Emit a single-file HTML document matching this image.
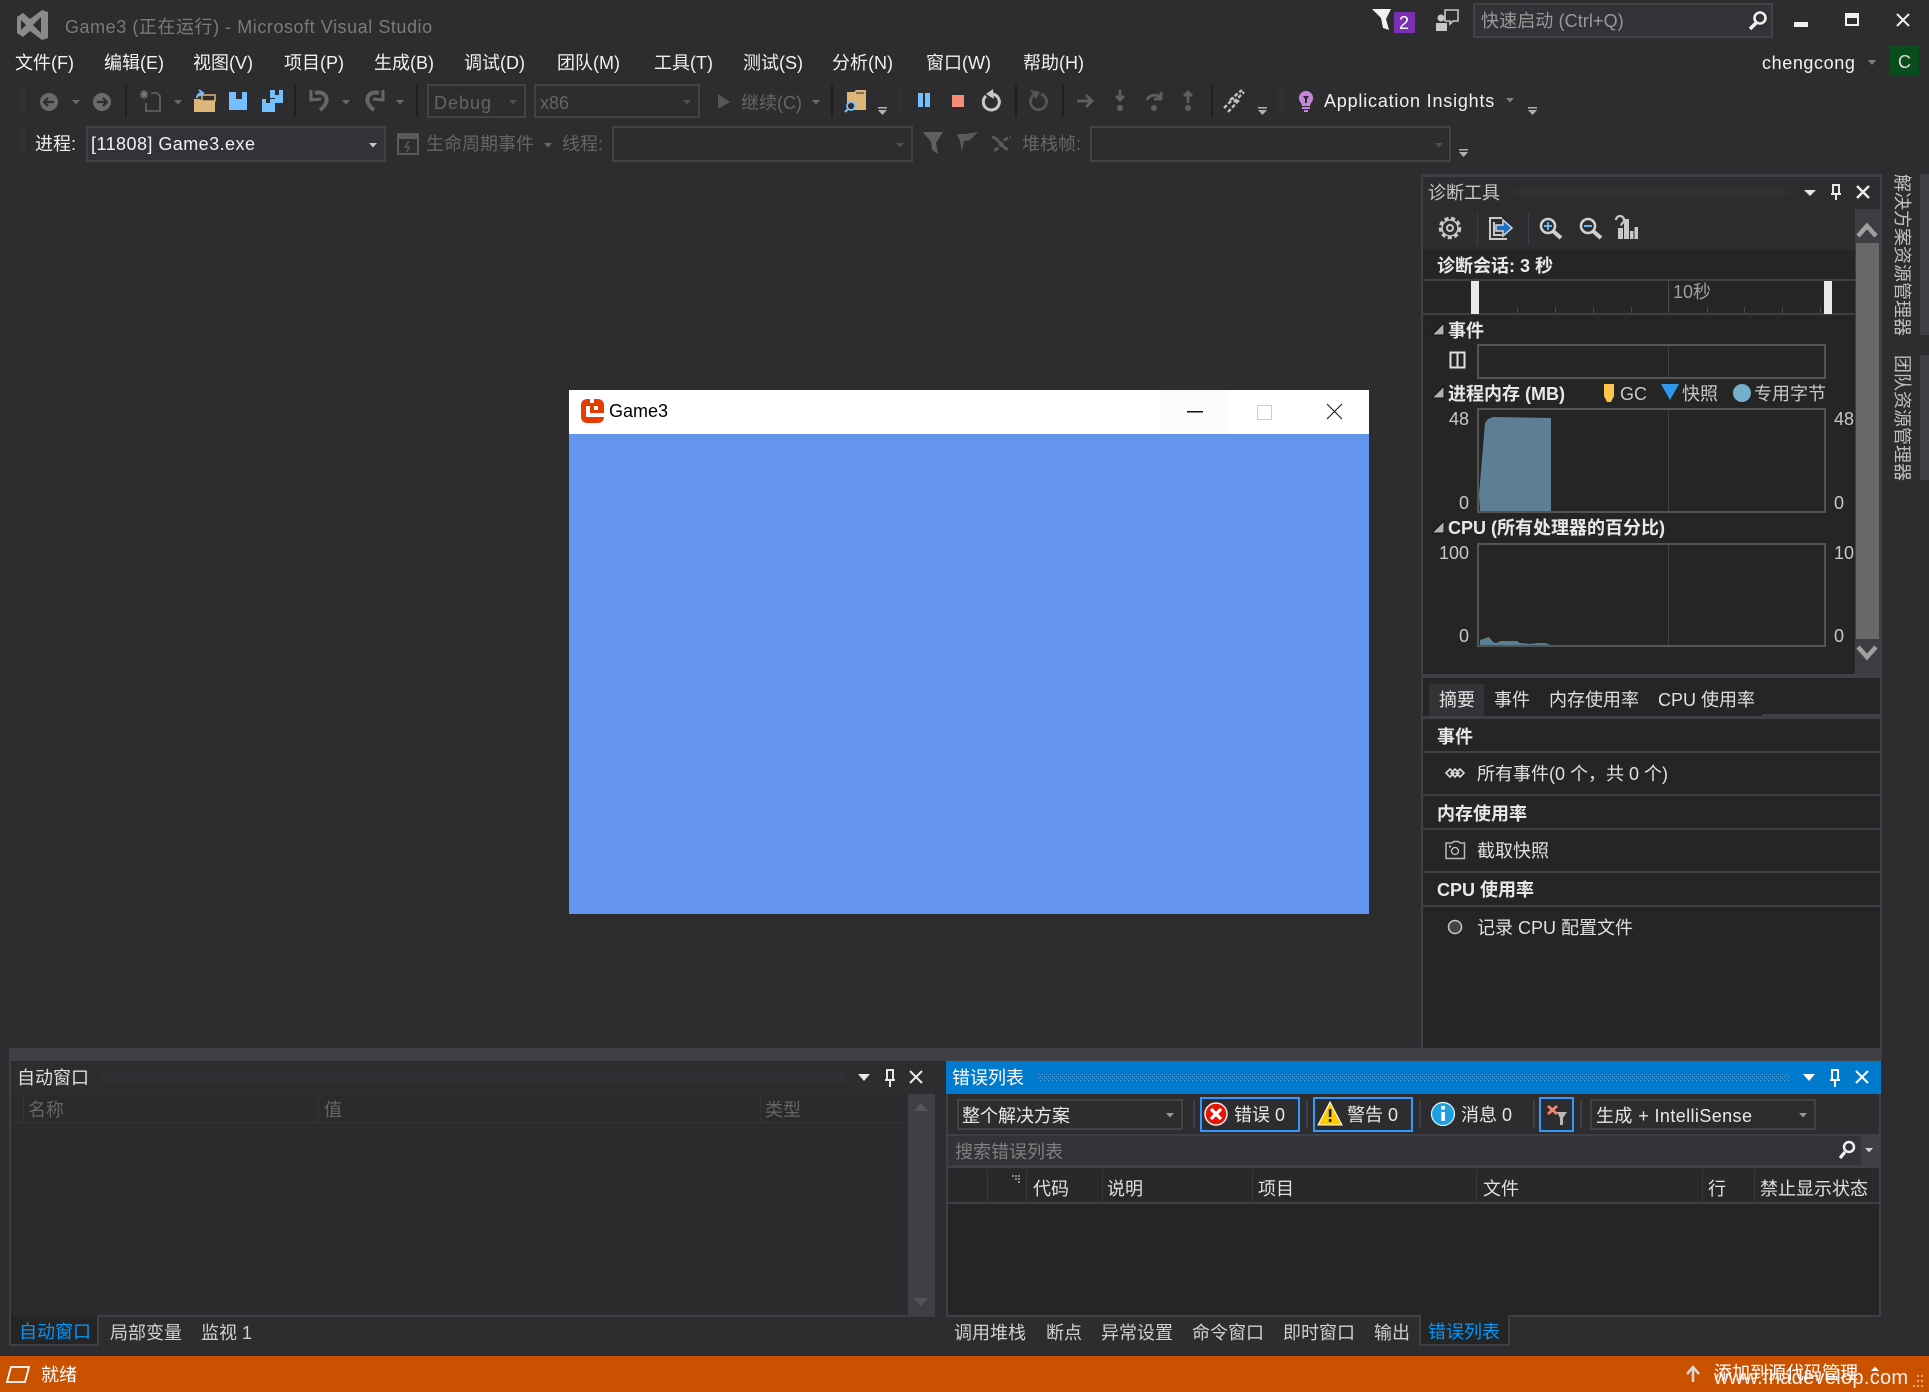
<!DOCTYPE html>
<html><head><meta charset="utf-8"><title>Game3 - Microsoft Visual Studio</title>
<style>
html,body{margin:0;padding:0;background:#2d2d30}
#r{position:relative;width:1929px;height:1392px;overflow:hidden;background:#2d2d30;font-family:"Liberation Sans","Noto Sans CJK SC",sans-serif;font-size:18px}
svg{position:absolute;left:0;top:0}
.t{position:absolute;white-space:nowrap;line-height:24px;height:24px;color:#f1f1f1;margin-top:1px}
.d{color:#656565}
.p{color:#d0d0d0}
.b{font-weight:bold;color:#e8e8e8}
.g{color:#c8c8c8}
.v{position:absolute;writing-mode:vertical-rl;text-orientation:sideways;white-space:nowrap;color:#c0c0c0;line-height:24px}
</style></head><body><div id="r">
<svg width="1929" height="1392" viewBox="0 0 1929 1392">
<defs>
<pattern id="gd" width="4" height="4" patternUnits="userSpaceOnUse"><rect width="1" height="1" fill="#46464a"/><rect x="2" y="2" width="1" height="1" fill="#46464a"/></pattern>
<pattern id="gb" width="4" height="4" patternUnits="userSpaceOnUse"><rect width="1" height="1" fill="#59a8de"/><rect x="2" y="2" width="1" height="1" fill="#59a8de"/></pattern>
</defs>
<!-- title bar icons -->
<path d="M17 17 L23 13 L30 19 L42 10 L48 12 V38 L42 40 L30 31 L23 37 L17 33 Z" fill="#8a8a8a"/>
<path d="M21 20 L26 25 L21 30 Z M41 17 V33 L33 25 Z" fill="#2d2d30"/>
<path d="M1372 9 H1391 L1386 19 L1389 30 L1383 28 L1381 18 Z" fill="#f1f1f1"/>
<rect x="1394" y="12" width="21" height="21" fill="#7b2fb5"/>
<path d="M1445 10 h13 v11 h-5 l-3 3 v-3 h-5 z" fill="none" stroke="#c8c8c8" stroke-width="1.600"/>
<circle cx="1441" cy="18" r="3.500" fill="#c8c8c8"/><rect x="1436" y="23" width="11" height="8" fill="#c8c8c8"/>
<rect x="1474" y="4" width="298" height="33" fill="#333337" stroke="#434346" stroke-width="2"/>
<circle cx="1760" cy="18" r="5.500" fill="none" stroke="#f1f1f1" stroke-width="2.600"/><path d="M1756 23 L1750 29" stroke="#f1f1f1" stroke-width="3.500"/>
<rect x="1794" y="22" width="14" height="5" fill="#f1f1f1"/>
<path d="M1845 13 h14 v13 h-14 z M1847 18 v6 h10 v-6 z" fill="#f1f1f1" fill-rule="evenodd"/>
<path d="M1897 14 L1909 26 M1909 14 L1897 26" stroke="#f1f1f1" stroke-width="2"/>
<path d="M1868 60 h8 l-4 5 z" fill="#808080"/>
<rect x="1889" y="46" width="30" height="30" fill="#084d1b"/>
<!-- toolbars grips -->
<rect x="19" y="86" width="6" height="28" fill="url(#gd)"/>
<rect x="19" y="128" width="6" height="28" fill="url(#gd)"/>
<rect x="898" y="86" width="6" height="28" fill="url(#gd)"/>
<rect x="1278" y="86" width="6" height="28" fill="url(#gd)"/>
<!-- separators -->
<g fill="#1f1f20">
<rect x="125" y="85" width="2" height="32"/><rect x="294" y="85" width="2" height="32"/><rect x="416" y="85" width="2" height="32"/><rect x="831" y="85" width="2" height="32"/><rect x="1015" y="85" width="2" height="32"/><rect x="1062" y="85" width="2" height="32"/><rect x="1211" y="85" width="2" height="32"/>
</g>
<!-- nav -->
<circle cx="49" cy="102" r="9" fill="#6a6a6a"/><path d="M54 102 H45 M48 98 L44 102 L48 106" stroke="#2d2d30" stroke-width="2.200" fill="none"/>
<circle cx="102" cy="102" r="9" fill="#6a6a6a"/><path d="M97 102 H106 M103 98 L107 102 L103 106" stroke="#2d2d30" stroke-width="2.200" fill="none"/>
<g fill="#6a6a6a"><path d="M72 100 h8 l-4 4.500 z"/><path d="M174 100 h8 l-4 4.500 z"/><path d="M342 100 h8 l-4 4.500 z"/><path d="M396 100 h8 l-4 4.500 z"/><path d="M509 100 h8 l-4 4.500 z" fill="#505050"/><path d="M683 100 h8 l-4 4.500 z" fill="#505050"/><path d="M812 100 h8 l-4 4.500 z"/></g>
<path d="M151 93 h6 l3 3 v15 h-14 v-8" fill="none" stroke="#5f5f5f" stroke-width="1.800"/><path d="M141 91.500 l6 6 M147 91.500 l-6 6 M144 90 v9 M140 94.500 h8" stroke="#777" stroke-width="1.500"/>
<!-- open -->
<path d="M194 99 h6 l2 2 h13 v11 h-21 z" fill="#dcb67a"/><path d="M202 95 h13 v6 h-13 z" fill="none" stroke="#dcb67a" stroke-width="1.500"/>
<path d="M197 98 a5 5 0 0 1 5 -5 M199 90 l4 3 l-4 3" fill="none" stroke="#75beff" stroke-width="2"/>
<!-- save -->
<path d="M229 92 h18 v18 h-18 z" fill="#75beff"/><rect x="236" y="92" width="6" height="7" fill="#2d2d30"/>
<path d="M270 90 h13 v13 h-8 v-5 h-5 z" fill="#75beff"/><rect x="275" y="90" width="4" height="5" fill="#2d2d30"/>
<path d="M262 99 h13 v13 h-13 z" fill="#75beff"/><rect x="266" y="99" width="4" height="4" fill="#2d2d30"/>
<!-- undo redo -->
<path d="M320 110 C332 101 326 90 315 93" fill="none" stroke="#666" stroke-width="4"/><path d="M311 90 V100 L321 99" fill="none" stroke="#666" stroke-width="3"/>
<path d="M374 110 C362 101 368 90 379 93" fill="none" stroke="#666" stroke-width="4"/><path d="M383 90 V100 L373 99" fill="none" stroke="#666" stroke-width="3"/>
<!-- combos -->
<rect x="428" y="85" width="97" height="32" fill="none" stroke="#434346" stroke-width="2"/>
<rect x="535" y="85" width="164" height="32" fill="none" stroke="#434346" stroke-width="2"/>
<path d="M718 94 L730 102 L718 109 Z" fill="#565656"/>
<!-- find -->
<path d="M847 92 h7 l2 -2 h10 v20 h-19 z" fill="#dcb67a"/><rect x="856" y="92" width="8" height="2" fill="#2d2d30" opacity=".5"/><circle cx="851" cy="106" r="4" fill="#2d2d30" stroke="#75beff" stroke-width="1.800"/><path d="M848 109 L845 112" stroke="#75beff" stroke-width="2"/>
<g fill="#b0b0b0"><path d="M878 107 h9 v1.500 h-9 z M878 110 h9 l-4.500 5 z"/><path d="M1258 107 h9 v1.500 h-9 z M1258 110 h9 l-4.500 5 z"/><path d="M1528 107 h9 v1.500 h-9 z M1528 110 h9 l-4.500 5 z"/><path d="M1459 149 h9 v1.500 h-9 z M1459 152 h9 l-4.500 5 z"/></g>
<!-- debug ctrls -->
<rect x="918" y="93" width="5" height="14" fill="#75beff"/><rect x="925" y="93" width="5" height="14" fill="#75beff"/>
<rect x="952" y="95" width="12" height="12" fill="#f88a78"/>
<path d="M986 96 A 8 8 0 1 0 992 94" fill="none" stroke="#c8c8c8" stroke-width="3"/><path d="M993 89 L986 94 L994 99 Z" fill="#c8c8c8"/>
<path d="M1034 95 A 8 8 0 1 0 1041 94" fill="none" stroke="#565656" stroke-width="2.800"/><path d="M1030 90 L1040 92 L1036 99 Z" fill="#565656"/>
<g stroke="#5f5f5f" stroke-width="2.800" fill="none"><path d="M1077 101 H1092 M1086 95 L1092 101 L1086 107"/><path d="M1120 90 V100 M1116 96 L1120 100 L1124 96"/><path d="M1147 100 A 8 7 0 0 1 1161 98 M1161 92 V99 H1154"/><path d="M1188 103 V93 M1184 96 L1188 92 L1192 96"/></g>
<g fill="#5f5f5f"><circle cx="1120" cy="108" r="3"/><circle cx="1154" cy="108" r="3"/><circle cx="1188" cy="108" r="3"/></g>
<g stroke="#c0c0c0" stroke-width="2.400" fill="none" stroke-dasharray="4 2"><path d="M1224 108 L1234 98 M1234 102 L1244 92"/><path d="M1228 112 L1239 100 M1230 100 L1242 90"/></g>
<path d="M1306 91 a7 7 0 0 1 5 12 l-1 3 h-8 l-1 -3 a7 7 0 0 1 5 -12 z" fill="#c586dc"/><path d="M1303 96 h6 l-2 3 v4 h-2 v-4 z" fill="#2d2d30"/><rect x="1302" y="107" width="8" height="2" fill="#c586dc"/><rect x="1304" y="110" width="4" height="2" fill="#c586dc"/>
<path d="M1506 98 h8 l-4 4.500 z" fill="#808080"/>
<!-- row2 -->
<rect x="87" y="127" width="298" height="34" fill="#333337" stroke="#434346" stroke-width="2"/>
<path d="M369 143 h8 l-4 4.500 z" fill="#c8c8c8"/>
<rect x="398" y="134" width="20" height="20" fill="none" stroke="#5a5a5a" stroke-width="2"/><rect x="398" y="134" width="20" height="5" fill="#5a5a5a"/><path d="M409 141 L405 147 H409 L407 152" stroke="#5a5a5a" stroke-width="1.500" fill="none"/>
<path d="M544 143 h8 l-4 4.500 z" fill="#6a6a6a"/>
<rect x="613" y="127" width="299" height="34" fill="none" stroke="#434346" stroke-width="2"/>
<path d="M896 143 h8 l-4 4.500 z" fill="#505050"/>
<path d="M923 132 H943 L936 143 L938 154 L932 150 L931 142 Z" fill="#606060"/>
<path d="M957 134 H966 L978 132 L970 140 L964 141 L962 152 L960 141 Z" fill="#5a5a5a"/>
<g stroke="#5a5a5a" stroke-width="2.800" fill="none"><path d="M992 137 C998 137 1002 149 1008 149"/><path d="M994 150 C1000 150 1002 138 1011 137" stroke-dasharray="5 2"/></g>
<rect x="1091" y="127" width="359" height="34" fill="none" stroke="#434346" stroke-width="2"/>
<path d="M1435 143 h8 l-4 4.500 z" fill="#505050"/>

<!-- game window -->
<rect x="569" y="390" width="800" height="44" fill="#fff"/>
<rect x="569" y="434" width="800" height="480" fill="#6495ed"/>
<rect x="1160" y="390" width="69" height="44" fill="#fbfbfb"/>
<rect x="581" y="399" width="23" height="24" rx="6" fill="#e73c00"/>
<rect x="590" y="399" width="4" height="4" fill="#fff"/>
<path d="M586 406 h4 v7 h14 v4 h-18 z" fill="#fff"/>
<rect x="594" y="406" width="4" height="4" fill="#fff"/>
<rect x="1187" y="411" width="16" height="1.500" fill="#111"/>
<rect x="1257.500" y="405.500" width="14" height="14" fill="none" stroke="#ccc"/>
<path d="M1327 404 L1342 419 M1342 404 L1327 419" stroke="#111" stroke-width="1"/>

<!-- diagnostics panel -->
<rect x="1421" y="174" width="461" height="874" fill="#3f3f46"/>
<rect x="1423" y="177" width="457" height="73" fill="#2d2d30"/>
<rect x="1423" y="250" width="432" height="424" fill="#252526"/>
<rect x="1855" y="209" width="25" height="465" fill="#3e3e42"/>
<rect x="1513" y="188" width="277" height="8" fill="url(#gd)"/>
<path d="M1804 190 h12 l-6 6 z" fill="#e8e8e8"/>
<path d="M1832 185 h8 M1833 185 v9 h6 v-9 M1831 194 h10 M1836 194 v6" stroke="#e8e8e8" stroke-width="2" fill="none"/>
<path d="M1857 186 L1869 198 M1869 186 L1857 198" stroke="#e8e8e8" stroke-width="2.500"/>
<rect x="1477" y="213" width="1" height="32" fill="#3f3f46"/><rect x="1528" y="213" width="1" height="32" fill="#3f3f46"/>
<circle cx="1450" cy="228" r="9.500" fill="none" stroke="#c8c8c8" stroke-width="3.500" stroke-dasharray="4 2.500"/><circle cx="1450" cy="228" r="8" fill="none" stroke="#c8c8c8" stroke-width="1.500"/><circle cx="1450" cy="228" r="3" fill="none" stroke="#c8c8c8" stroke-width="2"/>
<path d="M1502 218 H1490 V239 H1507 M1494 222 V235 H1502" fill="none" stroke="#c8c8c8" stroke-width="2"/><path d="M1496 225 H1503 V220 L1512 228 L1503 236 V231 H1496 Z" fill="#1e6fc0" stroke="#d8d8d8" stroke-width="1.500"/>
<circle cx="1548" cy="226" r="7" fill="none" stroke="#d0d0d0" stroke-width="2.600"/><path d="M1544 226 h8 M1548 222 v8" stroke="#6ab7f0" stroke-width="2"/><path d="M1553 231 L1561 238" stroke="#d0d0d0" stroke-width="4"/>
<circle cx="1588" cy="226" r="7" fill="none" stroke="#d0d0d0" stroke-width="2.600"/><path d="M1584 226 h8" stroke="#6ab7f0" stroke-width="2"/><path d="M1593 231 L1601 238" stroke="#d0d0d0" stroke-width="4"/>
<path d="M1616 220 a4 4 0 1 1 6 3.500 l-1 2" fill="none" stroke="#c8c8c8" stroke-width="2.200"/><g fill="#c8c8c8"><rect x="1618" y="228" width="5" height="11"/><rect x="1624" y="219" width="5" height="20"/><rect x="1630" y="231" width="3.500" height="8"/><rect x="1634.500" y="227" width="3.500" height="12"/></g>
<!-- ruler -->
<rect x="1423" y="279" width="432" height="2" fill="#3f3f46"/>
<rect x="1423" y="313" width="432" height="2" fill="#3f3f46"/>
<g fill="#4a4a4a"><rect x="1517" y="307" width="1" height="6"/><rect x="1555" y="307" width="1" height="6"/><rect x="1593" y="307" width="1" height="6"/><rect x="1631" y="307" width="1" height="6"/><rect x="1707" y="307" width="1" height="6"/><rect x="1744" y="307" width="1" height="6"/><rect x="1782" y="307" width="1" height="6"/><rect x="1820" y="307" width="1" height="6"/><rect x="1668" y="281" width="1" height="32"/></g>
<rect x="1471" y="281" width="8" height="33" fill="#e8e8e8"/><rect x="1824" y="281" width="8" height="33" fill="#e8e8e8"/>
<g fill="#b0b0b0" stroke="#111" stroke-width="1"><path d="M1444 323 V335 H1432 Z"/><path d="M1444 386 V398 H1432 Z"/><path d="M1444 521 V533 H1432 Z"/></g>
<path d="M1450.500 352.500 h14 v15 h-14 z M1457.500 352.500 v15" fill="none" stroke="#e0e0e0" stroke-width="2"/>
<g fill="none" stroke="#555" stroke-width="2"><rect x="1478" y="345" width="347" height="33"/><rect x="1478" y="409" width="347" height="103"/><rect x="1478" y="544" width="347" height="102"/></g>
<rect x="1668" y="346" width="1" height="31" fill="#3f3f46"/><rect x="1668" y="410" width="1" height="101" fill="#3f3f46"/><rect x="1668" y="545" width="1" height="100" fill="#3f3f46"/>
<path d="M1604 384 h10 v12 l-3 6 h-4 l-3 -6 z" fill="#fcc44f"/>
<path d="M1661 384 h18 l-9 16 z" fill="#2f98ee"/>
<circle cx="1742" cy="393" r="9" fill="#75afcb"/>
<path d="M1480 511 L1479 495 L1485 423 L1488 419 L1493 417 L1551 418 V511 Z" fill="#5c7f95"/>
<path d="M1480 645 V640 L1486 638 L1489 637 L1493 642 L1496 643 L1501 641 L1517 641 L1520 643 L1530 644 L1538 643 L1545 643 L1551 645 Z" fill="#5c7f95"/>
<rect x="1856" y="243" width="23" height="396" fill="#686868"/>
<path d="M1858 236 L1867 226 L1876 236" fill="none" stroke="#a0a0a0" stroke-width="4.500"/>
<path d="M1858 647 L1867 657 L1876 647" fill="none" stroke="#a0a0a0" stroke-width="4.500"/>
<!-- diag lower -->
<rect x="1423" y="678" width="457" height="36" fill="#252526"/>
<rect x="1423" y="714" width="339" height="2" fill="#252526"/>
<rect x="1429" y="684" width="55" height="32" fill="#333337"/>
<g fill="#252526"><rect x="1423" y="719" width="457" height="32"/><rect x="1423" y="753" width="457" height="41"/><rect x="1423" y="796" width="457" height="32"/><rect x="1423" y="830" width="457" height="41"/><rect x="1423" y="873" width="457" height="32"/><rect x="1423" y="907" width="457" height="141"/></g>
<g fill="none" stroke="#d8d8d8" stroke-width="1.600"><path d="M1446 773 l4 -4 l4 4 l-4 4 z M1451 773 l4 -4 l4 4 l-4 4 z M1456 773 l4 -4 l4 4 l-4 4 z"/></g>
<path d="M1446 843 h6 l1.500 -1.500 h5 l1.500 1.500 h4.500 v15.500 h-18.500 z" fill="none" stroke="#b8b8b8" stroke-width="1.500"/><circle cx="1455" cy="851" r="3.500" fill="none" stroke="#c8c8c8" stroke-width="1.300"/><rect x="1449" y="845.500" width="2" height="2" fill="#c8c8c8"/>
<circle cx="1455" cy="927" r="6.500" fill="#444" stroke="#c8c8c8" stroke-width="1.500"/>
<!-- right strip -->
<rect x="1920" y="174" width="9" height="161" fill="#3f3f46"/><rect x="1920" y="355" width="9" height="125" fill="#3f3f46"/>

<!-- bottom band -->
<rect x="9" y="1048" width="1873" height="13" fill="#3f3f46"/>
<!-- autos -->
<rect x="9" y="1061" width="926" height="256" fill="#3f3f46"/>
<rect x="11" y="1061" width="924" height="33" fill="#2d2d30"/>
<rect x="11" y="1094" width="897" height="221" fill="#2b2b2d"/>
<rect x="11" y="1122" width="897" height="1" fill="#333336"/>
<rect x="23" y="1096" width="1" height="26" fill="#333336"/><rect x="318" y="1096" width="1" height="26" fill="#333336"/><rect x="760" y="1096" width="1" height="26" fill="#333336"/>
<rect x="101" y="1073" width="745" height="8" fill="url(#gd)"/>
<path d="M858 1074 h12 l-6 7 z" fill="#e8e8e8"/>
<path d="M886 1070 h8 M887 1070 v10 h6 v-10 M885 1080 h10 M890 1080 v7" stroke="#e8e8e8" stroke-width="2" fill="none"/>
<path d="M910 1071 L922 1083 M922 1071 L910 1083" stroke="#e8e8e8" stroke-width="2"/>
<path d="M914 1111 h14 l-7 -8 z M914 1298 h14 l-7 8 z" fill="#555558"/>
<rect x="9" y="1315" width="90" height="31" fill="#3f3f46"/><rect x="11" y="1315" width="86" height="29" fill="#252526"/>
<!-- error list -->
<rect x="946" y="1061" width="935" height="256" fill="#3f3f46"/>
<rect x="946" y="1061" width="935" height="33" fill="#007acc"/>
<rect x="948" y="1094" width="931" height="40" fill="#2d2d30"/>
<rect x="1038" y="1073" width="752" height="8" fill="url(#gb)"/>
<path d="M1803 1074 h12 l-6 7 z" fill="#fff"/>
<path d="M1831 1070 h8 M1832 1070 v10 h6 v-10 M1830 1080 h10 M1835 1080 v7" stroke="#fff" stroke-width="2" fill="none"/>
<path d="M1856 1071 L1868 1083 M1868 1071 L1856 1083" stroke="#fff" stroke-width="2"/>
<rect x="958" y="1100" width="224" height="29" fill="none" stroke="#434346" stroke-width="2"/>
<path d="M1166 1113 h8 l-4 4.500 z" fill="#999"/>
<g fill="#3f3f46"><rect x="1193" y="1100" width="2" height="28"/><rect x="1306" y="1100" width="2" height="28"/><rect x="1419" y="1100" width="2" height="28"/><rect x="1533" y="1100" width="2" height="28"/><rect x="1580" y="1100" width="2" height="28"/></g>
<g fill="none" stroke="#3399ff" stroke-width="2"><rect x="1201" y="1098" width="98" height="33"/><rect x="1314" y="1098" width="98" height="33"/><rect x="1540" y="1098" width="33" height="33"/></g>
<circle cx="1216" cy="1114" r="11" fill="#e51400" stroke="#f0f0f0" stroke-width="1.500"/><path d="M1211 1109 L1221 1119 M1221 1109 L1211 1119" stroke="#fff" stroke-width="3.200"/>
<path d="M1330 1102 L1342 1125 H1318 Z" fill="#ffcc00" stroke="#fff" stroke-width="1"/><rect x="1328.800" y="1109" width="2.600" height="8" fill="#1e1e1e"/><rect x="1328.800" y="1119" width="2.600" height="3" fill="#1e1e1e"/>
<circle cx="1443" cy="1114" r="11.500" fill="#1ba1e2" stroke="#e8f4fb" stroke-width="1.200"/><rect x="1441.300" y="1112" width="3.600" height="9" fill="#fff"/><rect x="1441.300" y="1106" width="3.600" height="3.600" fill="#fff"/>
<path d="M1548 1106 L1557 1114 M1557 1106 L1548 1114" stroke="#f48771" stroke-width="2.800"/>
<path d="M1557 1112 H1567 L1563 1118 V1125 H1560 V1118 Z" fill="#b8b8b8"/>
<rect x="1591" y="1100" width="224" height="29" fill="none" stroke="#434346" stroke-width="2"/>
<path d="M1799 1113 h8 l-4 4.500 z" fill="#999"/>
<rect x="948" y="1136" width="913" height="29" fill="#333337"/>
<circle cx="1849" cy="1147" r="5" fill="none" stroke="#f1f1f1" stroke-width="2.500"/><path d="M1845 1152 L1840 1158" stroke="#f1f1f1" stroke-width="3.200"/>
<path d="M1865 1148 h8 l-4 4.500 z" fill="#d0d0d0"/>
<rect x="948" y="1168" width="931" height="34" fill="#29292b"/>
<rect x="948" y="1204" width="931" height="111" fill="#252526"/>
<g fill="#39393c"><rect x="987" y="1170" width="1" height="32"/><rect x="1026" y="1170" width="1" height="32"/><rect x="1102" y="1170" width="1" height="32"/><rect x="1252" y="1170" width="1" height="32"/><rect x="1476" y="1170" width="1" height="32"/><rect x="1702" y="1170" width="1" height="32"/><rect x="1754" y="1170" width="1" height="32"/></g>
<g fill="#888"><rect x="1012" y="1175" width="2" height="2"/><rect x="1015" y="1175" width="2" height="2"/><rect x="1018" y="1175" width="2" height="2"/><rect x="1015" y="1178" width="2" height="2"/><rect x="1018" y="1178" width="2" height="2"/><rect x="1018" y="1181" width="2" height="2"/></g>
<rect x="1419" y="1315" width="91" height="31" fill="#3f3f46"/><rect x="1421" y="1315" width="87" height="29" fill="#252526"/>
<!-- status bar -->
<rect x="0" y="1356" width="1929" height="36" fill="#ca5100"/>
<path d="M11 1367 H29 L25 1382 H7 Z" fill="none" stroke="#fff" stroke-width="1.800"/>
<path d="M1693 1382 V1368 M1687 1374 L1693 1367 L1699 1374" stroke="#d8d8d8" stroke-width="2.500" fill="none"/>
<path d="M1871 1371 h8 l-4 -4.500 z" fill="#fff"/>
<g fill="#e8a878"><rect x="1917" y="1375" width="2" height="2"/><rect x="1921" y="1375" width="2" height="2"/><rect x="1917" y="1380" width="2" height="2"/><rect x="1921" y="1380" width="2" height="2"/><rect x="1913" y="1385" width="2" height="2"/><rect x="1917" y="1385" width="2" height="2"/><rect x="1921" y="1385" width="2" height="2"/></g>
</svg>

<span class="t" style="left:65px;top:14px;color:#7a7a7a;letter-spacing:.55px">Game3 (正在运行) - Microsoft Visual Studio</span>
<span class="t" style="left:1399px;top:10px;color:#fff">2</span>
<span class="t" style="left:1481px;top:8px;color:#999;letter-spacing:.1px">快速启动 (Ctrl+Q)</span>
<span class="t" style="left:15px;top:50px">文件(F)</span>
<span class="t" style="left:104px;top:50px">编辑(E)</span>
<span class="t" style="left:193px;top:50px">视图(V)</span>
<span class="t" style="left:284px;top:50px">项目(P)</span>
<span class="t" style="left:374px;top:50px">生成(B)</span>
<span class="t" style="left:464px;top:50px">调试(D)</span>
<span class="t" style="left:557px;top:50px">团队(M)</span>
<span class="t" style="left:654px;top:50px">工具(T)</span>
<span class="t" style="left:743px;top:50px">测试(S)</span>
<span class="t" style="left:832px;top:50px">分析(N)</span>
<span class="t" style="left:926px;top:50px">窗口(W)</span>
<span class="t" style="left:1023px;top:50px">帮助(H)</span>
<span class="t" style="left:1762px;top:50px;letter-spacing:.6px">chengcong</span>
<span class="t" style="left:1898px;top:49px;color:#ddd">C</span>
<span class="t d" style="left:434px;top:90px;letter-spacing:1px">Debug</span>
<span class="t d" style="left:540px;top:90px">x86</span>
<span class="t d" style="left:741px;top:90px">继续(C)</span>
<span class="t" style="left:1324px;top:88px;letter-spacing:.8px">Application Insights</span>
<span class="t" style="left:35px;top:131px">进程:</span>
<span class="t" style="left:91px;top:131px;letter-spacing:.45px">[11808] Game3.exe</span>
<span class="t d" style="left:426px;top:131px">生命周期事件</span>
<span class="t d" style="left:562px;top:131px">线程:</span>
<span class="t d" style="left:1022px;top:131px">堆栈帧:</span>

<span class="t" style="left:609px;top:398px;color:#000">Game3</span>

<span class="t g" style="left:1428px;top:180px">诊断工具</span>
<span class="t b" style="left:1437px;top:253px">诊断会话: 3 秒</span>
<span class="t" style="left:1673px;top:279px;color:#a0a0a0">10秒</span>
<span class="t b" style="left:1448px;top:318px">事件</span>
<span class="t b" style="left:1448px;top:381px">进程内存 (MB)</span>
<span class="t g" style="left:1620px;top:381px">GC</span>
<span class="t g" style="left:1682px;top:381px">快照</span>
<span class="t g" style="left:1754px;top:381px">专用字节</span>
<span class="t g" style="left:1449px;top:406px;width:20px;text-align:right">48</span>
<span class="t g" style="left:1449px;top:490px;width:20px;text-align:right">0</span>
<span class="t g" style="left:1834px;top:406px">48</span>
<span class="t g" style="left:1834px;top:490px">0</span>
<span class="t b" style="left:1448px;top:515px">CPU (所有处理器的百分比)</span>
<span class="t g" style="left:1429px;top:540px;width:40px;text-align:right">100</span>
<span class="t g" style="left:1449px;top:623px;width:20px;text-align:right">0</span>
<span class="t g" style="left:1834px;top:540px">10</span>
<span class="t g" style="left:1834px;top:623px">0</span>

<span class="t" style="left:1439px;top:687px;color:#e0e0e0">摘要</span>
<span class="t" style="left:1494px;top:687px;color:#e0e0e0">事件</span>
<span class="t" style="left:1549px;top:687px;color:#e0e0e0">内存使用率</span>
<span class="t" style="left:1658px;top:687px;color:#e0e0e0">CPU 使用率</span>
<span class="t b" style="left:1437px;top:724px">事件</span>
<span class="t" style="left:1477px;top:761px;color:#e0e0e0">所有事件(0 个，共 0 个)</span>
<span class="t b" style="left:1437px;top:801px">内存使用率</span>
<span class="t" style="left:1477px;top:838px;color:#e0e0e0">截取快照</span>
<span class="t b" style="left:1437px;top:877px">CPU 使用率</span>
<span class="t" style="left:1477px;top:915px;color:#e0e0e0">记录 CPU 配置文件</span>
<span class="v" style="left:1890px;top:174px">解决方案资源管理器</span>
<span class="v" style="left:1890px;top:355px">团队资源管理器</span>

<span class="t g" style="left:17px;top:1065px;color:#e0e0e0">自动窗口</span>
<span class="t d" style="left:28px;top:1097px">名称</span>
<span class="t d" style="left:324px;top:1097px">值</span>
<span class="t d" style="left:765px;top:1097px">类型</span>
<span class="t" style="left:19px;top:1319px;color:#0097fb">自动窗口</span>
<span class="t p" style="left:110px;top:1320px">局部变量</span>
<span class="t p" style="left:201px;top:1320px">监视 1</span>

<span class="t" style="left:952px;top:1065px;color:#fff">错误列表</span>
<span class="t" style="left:962px;top:1103px;color:#e8e8e8">整个解决方案</span>
<span class="t" style="left:1234px;top:1102px;color:#e8e8e8">错误 0</span>
<span class="t" style="left:1347px;top:1102px;color:#e8e8e8">警告 0</span>
<span class="t" style="left:1461px;top:1102px;color:#e8e8e8">消息 0</span>
<span class="t" style="left:1596px;top:1103px;color:#e8e8e8;letter-spacing:.4px">生成 + IntelliSense</span>
<span class="t" style="left:955px;top:1139px;color:#808080">搜索错误列表</span>
<span class="t" style="left:1033px;top:1176px;color:#e0e0e0">代码</span>
<span class="t" style="left:1107px;top:1176px;color:#e0e0e0">说明</span>
<span class="t" style="left:1258px;top:1176px;color:#e0e0e0">项目</span>
<span class="t" style="left:1483px;top:1176px;color:#e0e0e0">文件</span>
<span class="t" style="left:1708px;top:1176px;color:#e0e0e0">行</span>
<span class="t" style="left:1760px;top:1176px;color:#e0e0e0">禁止显示状态</span>
<span class="t p" style="left:954px;top:1320px">调用堆栈</span>
<span class="t p" style="left:1046px;top:1320px">断点</span>
<span class="t p" style="left:1101px;top:1320px">异常设置</span>
<span class="t p" style="left:1192px;top:1320px">命令窗口</span>
<span class="t p" style="left:1283px;top:1320px">即时窗口</span>
<span class="t p" style="left:1374px;top:1320px">输出</span>
<span class="t" style="left:1428px;top:1319px;color:#0097fb">错误列表</span>

<span class="t" style="left:41px;top:1362px;color:#fff">就绪</span>
<span class="t" style="left:1714px;top:1360px;color:#fff">添加到源代码管理</span>
<span class="t" style="left:1714px;top:1365px;color:#fff;font-size:20px;letter-spacing:.3px;opacity:.92">www.fhadevelop.com</span>
</div></body></html>
